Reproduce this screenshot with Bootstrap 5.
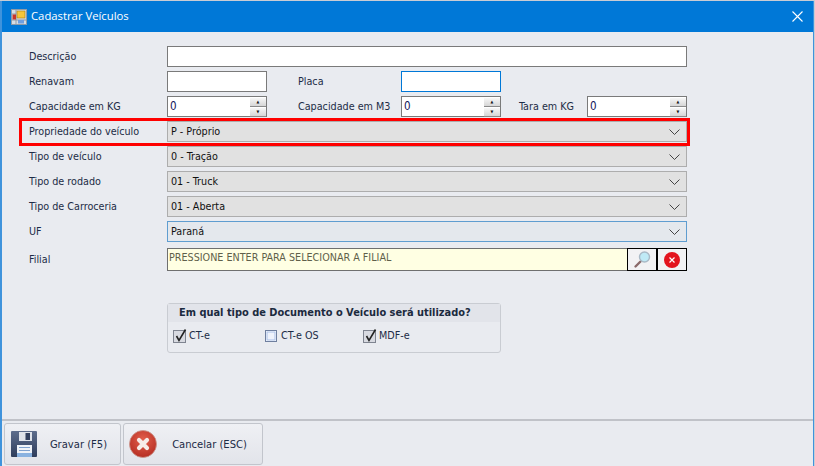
<!DOCTYPE html>
<html lang="en">
<head>
    <meta charset="UTF-8">
    <meta name="viewport" content="width=device-width, initial-scale=1.0">
    <title>Cadastrar Veículos</title>
    <link href="https://cdn.jsdelivr.net/npm/bootstrap@5.3.1/dist/css/bootstrap.min.css" rel="stylesheet">
    <style>
        html, body {
            height: 100%;
            margin: 0;
            overflow: hidden;
        }
        body {
            background: #c9ccd4;
            font-family: "DejaVu Sans", sans-serif;
            font-stretch: condensed;
            font-size: 10.7px;
            color: #1c2b46;
        }
        .win {
            height: 100%;
            margin: 1px 1px 0 0;
            background: #e9ebf0;
            border-left: 2px solid #3f93dc;
            border-right: 1px solid #3f93dc;
        }
        .win-title {
            height: 31px;
            background: #0078d7;
            color: #fff;
            font-family: "Open Sans", sans-serif;
            font-stretch: normal;
            font-size: 11.3px;
            padding: 0 10px 0 9px;
            gap: 4px;
        }
        .win-form {
            padding: 14px 0 0 27px;
            height: 389px;
            border-bottom: 2px solid #c0c2c8;
        }
        .field-row {
            height: 21px;
            width: 658px;
        }
        .field-row + .field-row {
            margin-top: 4px;
        }
        .field-label {
            width: 138px;
            flex: none;
            padding-top: 2px;
        }
        .field-input {
            height: 21px;
            background: #fff;
            border: 1px solid #7a7a7a;
        }
        .w-full { flex: 1; }
        .w-short { width: 100px; flex: none; }
        .field-input.is-focus { border-color: #0078d7; }
        .label-mid { width: 134px; flex: none; padding: 2px 0 0 31px; }
        .label-end { width: 86px; flex: none; padding: 2px 0 0 18px; }
        .spin-value {
            padding-left: 2px;
            color: #14145a;
            font-size: 11.5px;
            line-height: 19px;
        }
        .spin-btns {
            width: 16px;
            margin-left: auto;
            gap: 1px;
            padding: 1px 0;
        }
        .spin-btns span {
            flex: 1;
            background: linear-gradient(#f7f7f7, #d6d6d6);
            border-bottom: 1px solid #8a8a8a;
            font-size: 4px;
            line-height: 8px;
            text-align: center;
            color: #111;
        }
        .combo {
            height: 21px;
            flex: 1;
            background: #e1e1e1;
            border: 1px solid #adadad;
            padding: 1px 6px 0 3px;
            color: #111;
        }
        .combo.is-active {
            background: #e4e8ed;
            border-color: #5f9dd0;
        }
        .combo svg { margin-left: auto; }
        .highlight-row { position: relative; }
        .highlight-box {
            position: absolute;
            left: -10px;
            top: -3px;
            width: 671px;
            height: 28px;
            border: 3px solid #f00;
            pointer-events: none;
        }
        .filial-row { margin-top: 6px !important; height: 23px; }
        .filial-input {
            flex: 1;
            height: 23px;
            background: #ffffe3;
            border: 1px solid #6f6f6f;
            border-right: 0;
            padding: 0 0 2px 1px;
            color: #5f5f4a;
        }
        .filial-btn {
            width: 30px;
            height: 23px;
            flex: none;
            border: 1px solid #000;
            background: #f2f2f4;
            padding: 0;
        }
        .doc-group {
            width: 334px;
            height: 50px;
            margin: 32px 0 0 138px;
            border: 1px solid #c9ccd2;
            border-radius: 3px;
        }
        .doc-group-head {
            height: 18px;
            background: #e2e4ea;
            font-weight: 700;
            font-size: 10.95px;
            color: #1b2a3e;
            padding-left: 11px;
            line-height: 17px;
            white-space: nowrap;
        }
        .doc-group-body { padding: 6px 0 0 5px; }
        .doc-check { gap: 2px; }
        .doc-check svg { flex: none; }
        .doc-check.w1 { width: 92px; }
        .doc-check.w2 { width: 98px; }
        .doc-check.w2 svg { margin-right: 2px; }
        .win-foot {
            padding: 2px 0 0 2px;
            gap: 2px;
        }
        .foot-btn {
            height: 42px;
            border: 1px solid #c2c5cc;
            border-radius: 3px;
            background: linear-gradient(#eff0f4, #e2e4ea);
            color: #1c2b46;
            font-size: 10px;
            padding: 0;
        }
        .foot-btn.b1 { width: 117px; }
        .foot-btn.b2 { width: 140px; }
        .foot-btn svg { flex: none; }
        .foot-btn.b1 svg { margin-left: 6px; }
        .foot-btn.b2 svg { margin-left: 5px; }
        .foot-btn span { flex: 1; text-align: center; }
    </style>
</head>
<body>
    <div class="win d-flex flex-column">
        <!-- Title bar -->
        <div class="win-title d-flex align-items-center">
            <svg width="16" height="16" viewBox="0 0 16 16">
                <rect x=".5" y=".5" width="15" height="15" fill="#d7dde4" stroke="#8f9ba8"/>
                <path d="M5 1v14M1 5h4M1 11h4M5 11h10" stroke="#8f9ba8"/>
                <rect x="6" y="2" width="8" height="7" fill="#f6c63a" stroke="#a97a10" stroke-width=".6"/>
                <rect x="1.5" y="5.5" width="3.5" height="5" fill="#c8342a"/>
                <rect x="7" y="11" width="6" height="3.5" fill="#6f9fe0"/>
            </svg>
            <span>Cadastrar Veículos</span>
            <svg class="ms-auto" width="11" height="11" viewBox="0 0 11 11">
                <path d="M.5.5l10 10M10.5.5l-10 10" stroke="#fff" stroke-width="1.1"/>
            </svg>
        </div>

        <!-- Form -->
        <div class="win-form">
            <div class="field-row d-flex align-items-center">
                <div class="field-label">Descrição</div>
                <div class="field-input w-full"></div>
            </div>
            <div class="field-row d-flex align-items-center">
                <div class="field-label">Renavam</div>
                <div class="field-input w-short"></div>
                <div class="label-mid">Placa</div>
                <div class="field-input w-short is-focus"></div>
            </div>
            <div class="field-row d-flex align-items-center">
                <div class="field-label">Capacidade em KG</div>
                <div class="field-input w-short d-flex">
                    <span class="spin-value">0</span>
                    <div class="spin-btns d-flex flex-column"><span>▲</span><span>▼</span></div>
                </div>
                <div class="label-mid text-nowrap">Capacidade em M3</div>
                <div class="field-input w-short d-flex">
                    <span class="spin-value">0</span>
                    <div class="spin-btns d-flex flex-column"><span>▲</span><span>▼</span></div>
                </div>
                <div class="label-end text-nowrap">Tara em KG</div>
                <div class="field-input w-short d-flex">
                    <span class="spin-value">0</span>
                    <div class="spin-btns d-flex flex-column"><span>▲</span><span>▼</span></div>
                </div>
            </div>
            <div class="field-row highlight-row d-flex align-items-center">
                <div class="field-label">Propriedade do veículo</div>
                <div class="combo d-flex align-items-center">P - Próprio
                    <svg width="11" height="6" viewBox="0 0 11 6"><path d="M.5.5l5 5 5-5" fill="none" stroke="#444"/></svg>
                </div>
                <div class="highlight-box"></div>
            </div>
            <div class="field-row d-flex align-items-center">
                <div class="field-label">Tipo de veículo</div>
                <div class="combo d-flex align-items-center">0 - Tração
                    <svg width="11" height="6" viewBox="0 0 11 6"><path d="M.5.5l5 5 5-5" fill="none" stroke="#444"/></svg>
                </div>
            </div>
            <div class="field-row d-flex align-items-center">
                <div class="field-label">Tipo de rodado</div>
                <div class="combo d-flex align-items-center">01 - Truck
                    <svg width="11" height="6" viewBox="0 0 11 6"><path d="M.5.5l5 5 5-5" fill="none" stroke="#444"/></svg>
                </div>
            </div>
            <div class="field-row d-flex align-items-center">
                <div class="field-label">Tipo de Carroceria</div>
                <div class="combo d-flex align-items-center">01 - Aberta
                    <svg width="11" height="6" viewBox="0 0 11 6"><path d="M.5.5l5 5 5-5" fill="none" stroke="#444"/></svg>
                </div>
            </div>
            <div class="field-row d-flex align-items-center">
                <div class="field-label">UF</div>
                <div class="combo is-active d-flex align-items-center">Paraná
                    <svg width="11" height="6" viewBox="0 0 11 6"><path d="M.5.5l5 5 5-5" fill="none" stroke="#444"/></svg>
                </div>
            </div>
            <div class="field-row filial-row d-flex align-items-center">
                <div class="field-label">Filial</div>
                <div class="filial-input d-flex align-items-center">PRESSIONE ENTER PARA SELECIONAR A FILIAL</div>
                <button type="button" class="filial-btn d-flex align-items-center justify-content-center">
                    <svg width="20" height="20" viewBox="0 0 20 20">
                        <path d="M8.5 11.5l-5 5" stroke="#8a6a6a" stroke-width="2.4" stroke-linecap="round"/>
                        <circle cx="12.5" cy="7" r="5" fill="#bfeaf6" stroke="#a9b9c6" stroke-width="1.4"/>
                    </svg>
                </button>
                <button type="button" class="filial-btn d-flex align-items-center justify-content-center">
                    <svg width="16" height="16" viewBox="0 0 16 16">
                        <circle cx="8" cy="8" r="8" fill="#e3141e"/>
                        <path d="M5.5 5.5l5 5M10.5 5.5l-5 5" stroke="#fff" stroke-width="1.2"/>
                    </svg>
                </button>
            </div>

            <div class="doc-group">
                <div class="doc-group-head">Em qual tipo de Documento o Veículo será utilizado?</div>
                <div class="doc-group-body d-flex">
                    <div class="doc-check w1 d-flex align-items-center">
                        <svg width="14" height="14" viewBox="0 0 14 14"><rect x=".5" y="1.5" width="12" height="12" fill="#d8dae1" stroke="#7f8490"/><path d="M3.5 7l2.5 4.5L12.5 .5" fill="none" stroke="#222" stroke-width="1.6"/></svg>
                        <span>CT-e</span>
                    </div>
                    <div class="doc-check w2 d-flex align-items-center">
                        <svg width="12" height="12" viewBox="0 0 12 12"><rect x=".5" y=".5" width="11" height="11" fill="#fff" stroke="#6f7f9f"/><rect x="2" y="2" width="8" height="8" fill="#eef2fb" stroke="#a9bfe8"/></svg>
                        <span>CT-e OS</span>
                    </div>
                    <div class="doc-check d-flex align-items-center">
                        <svg width="14" height="14" viewBox="0 0 14 14"><rect x=".5" y="1.5" width="12" height="12" fill="#d8dae1" stroke="#7f8490"/><path d="M3.5 7l2.5 4.5L12.5 .5" fill="none" stroke="#222" stroke-width="1.6"/></svg>
                        <span>MDF-e</span>
                    </div>
                </div>
            </div>
        </div>

        <!-- Footer buttons -->
        <div class="win-foot d-flex">
            <button type="button" class="foot-btn b1 d-flex align-items-center">
                <svg width="26" height="26" viewBox="0 0 26 26">
                    <defs><linearGradient id="disk" x1="0" y1="0" x2="0" y2="1"><stop offset="0" stop-color="#5d6d8c"/><stop offset="1" stop-color="#2f3d5c"/></linearGradient></defs>
                    <rect width="26" height="26" rx="1" fill="url(#disk)"/>
                    <rect x="8" y="1" width="13" height="9" fill="#dfe3ea"/>
                    <rect x="14.5" y="2" width="4.5" height="7" fill="#33415f"/>
                    <rect x="6" y="14" width="15" height="12" fill="#f0f3f8"/>
                    <rect x="6" y="22" width="15" height="4" fill="#8ab2e0"/>
                    <path d="M8 16.5h11M8 19.5h11" stroke="#7fa2cf"/>
                </svg>
                <span>Gravar (F5)</span>
            </button>
            <button type="button" class="foot-btn b2 d-flex align-items-center">
                <svg width="28" height="28" viewBox="0 0 28 28">
                    <defs><radialGradient id="stop" cx=".5" cy=".35" r=".7"><stop offset="0" stop-color="#e3604c"/><stop offset="1" stop-color="#b32a20"/></radialGradient></defs>
                    <circle cx="14" cy="14" r="13.5" fill="url(#stop)" stroke="#c9958c" stroke-width=".8"/>
                    <path d="M10 10l8 8M18 10l-8 8" stroke="#f7ece8" stroke-width="4.2" stroke-linecap="round"/>
                </svg>
                <span>Cancelar (ESC)</span>
            </button>
        </div>
    </div>
    <script src="https://cdn.jsdelivr.net/npm/bootstrap@5.3.1/dist/js/bootstrap.bundle.min.js"></script>
</body>
</html>
